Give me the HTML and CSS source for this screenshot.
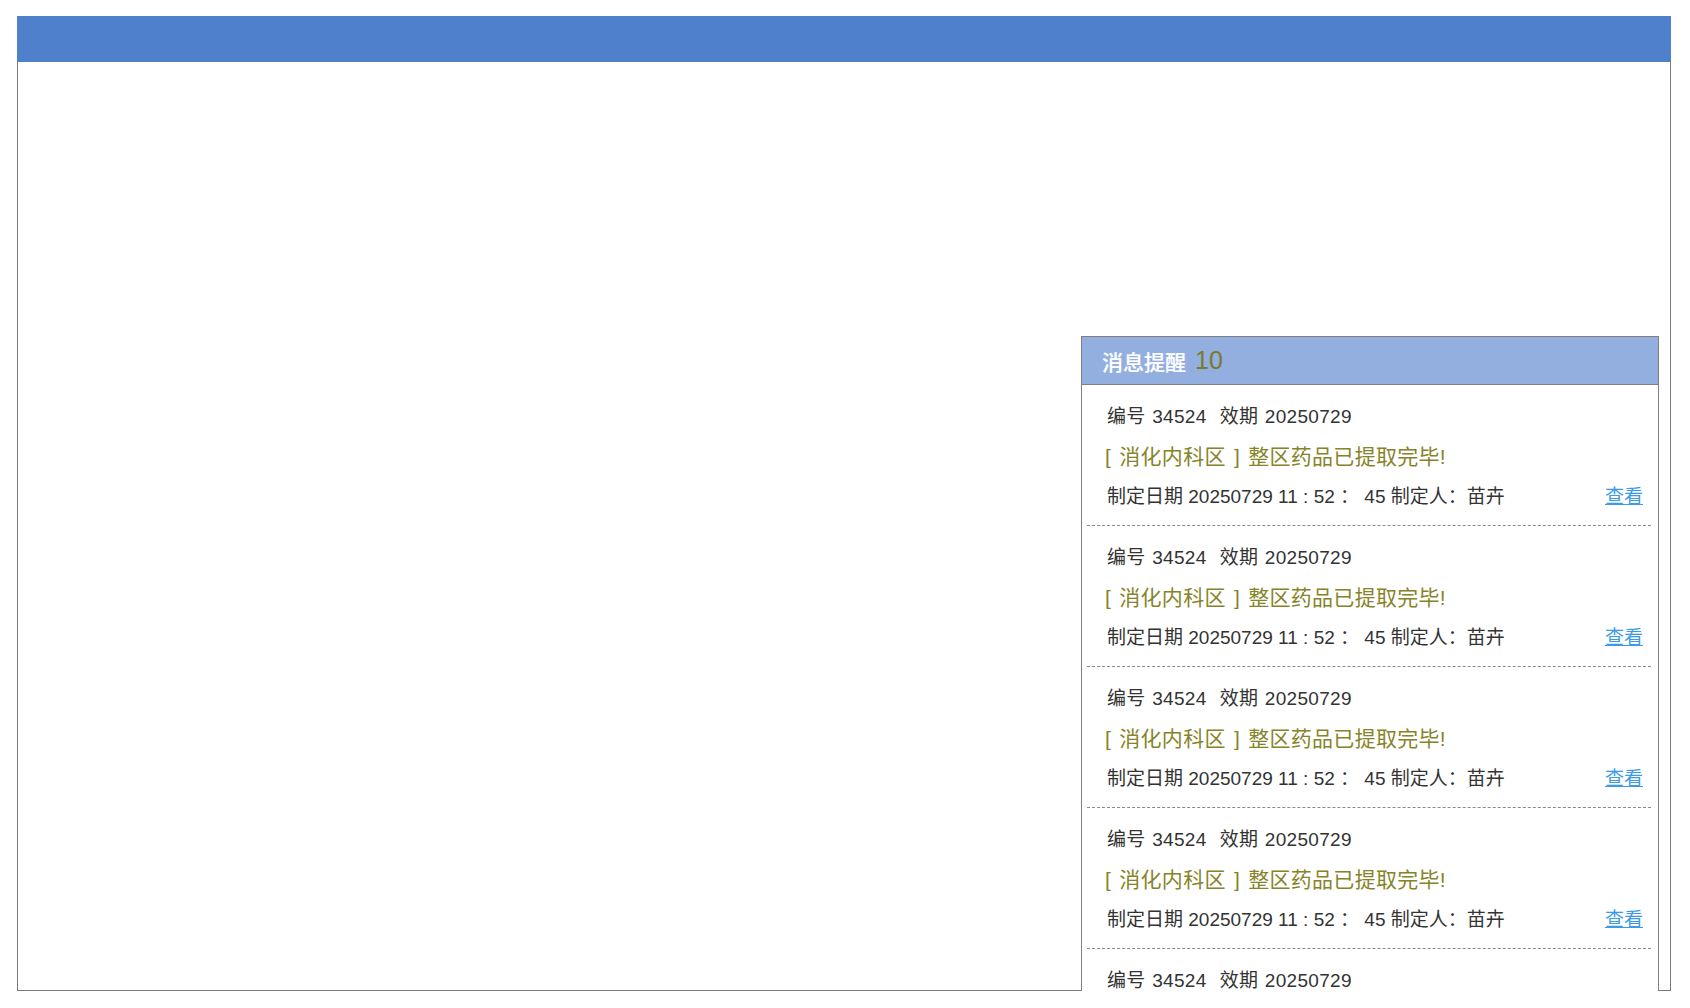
FILE: index.html
```html
<!DOCTYPE html>
<html lang="zh-CN">
<head>
<meta charset="utf-8">
<title>消息提醒</title>
<link rel="stylesheet" href="styles.css">
</head>
<body>
<div class="app">
  <header class="topbar"></header>
  <main class="main">
    <section class="notice">
      <div class="notice-head">
        <span class="notice-title">消息提醒</span><span class="notice-count">10</span>
      </div>
      <ul class="notice-list">
        <li class="notice-item">
          <div class="line meta">编号 34524&nbsp;&nbsp;效期 20250729</div>
          <div class="line msg">[ 消化内科区 ] 整区药品已提取完毕!</div>
          <div class="line foot"><span>制定日期 20250729 11 : 52 ： 45 制定人：苗卉</span><a class="view" href="#">查看</a></div>
        </li>
        <li class="notice-item">
          <div class="line meta">编号 34524&nbsp;&nbsp;效期 20250729</div>
          <div class="line msg">[ 消化内科区 ] 整区药品已提取完毕!</div>
          <div class="line foot"><span>制定日期 20250729 11 : 52 ： 45 制定人：苗卉</span><a class="view" href="#">查看</a></div>
        </li>
        <li class="notice-item">
          <div class="line meta">编号 34524&nbsp;&nbsp;效期 20250729</div>
          <div class="line msg">[ 消化内科区 ] 整区药品已提取完毕!</div>
          <div class="line foot"><span>制定日期 20250729 11 : 52 ： 45 制定人：苗卉</span><a class="view" href="#">查看</a></div>
        </li>
        <li class="notice-item">
          <div class="line meta">编号 34524&nbsp;&nbsp;效期 20250729</div>
          <div class="line msg">[ 消化内科区 ] 整区药品已提取完毕!</div>
          <div class="line foot"><span>制定日期 20250729 11 : 52 ： 45 制定人：苗卉</span><a class="view" href="#">查看</a></div>
        </li>
        <li class="notice-item">
          <div class="line meta">编号 34524&nbsp;&nbsp;效期 20250729</div>
          <div class="line msg">[ 消化内科区 ] 整区药品已提取完毕!</div>
          <div class="line foot"><span>制定日期 20250729 11 : 52 ： 45 制定人：苗卉</span><a class="view" href="#">查看</a></div>
        </li>
        <li class="notice-item">
          <div class="line meta">编号 34524&nbsp;&nbsp;效期 20250729</div>
          <div class="line msg">[ 消化内科区 ] 整区药品已提取完毕!</div>
          <div class="line foot"><span>制定日期 20250729 11 : 52 ： 45 制定人：苗卉</span><a class="view" href="#">查看</a></div>
        </li>
      </ul>
    </section>
  </main>
</div>
</body>
</html>
```

FILE: styles.css
```css
* {
  box-sizing: border-box;
}

html, body {
  margin: 0;
  padding: 0;
  background: #ffffff;
}

body {
  font-family: "Liberation Sans", "Noto Sans CJK SC", sans-serif;
  color: #333333;
}

.app {
  margin: 16px 0 0 17px;
  width: 1654px;
}

.topbar {
  height: 46px;
  background: #4f80cb;
}

.main {
  position: relative;
  height: 929px;
  border: 1px solid #7a7a7a;
  border-top: none;
}

.notice {
  position: absolute;
  right: 11px;
  bottom: -1px;
  width: 578px;
  height: 655px;
  overflow: hidden;
  background: #ffffff;
  border: 1px solid #808080;
  border-bottom: none;
}

.notice-head {
  display: flex;
  align-items: center;
  height: 48px;
  padding-left: 20px;
  background: #92afdf;
  border-bottom: 1px solid #808080;
}

.notice-title {
  font-size: 21px;
  font-weight: 500;
  color: #ffffff;
  -webkit-text-stroke: 0.2px #ffffff;
}

.notice-count {
  margin-left: 9px;
  font-size: 25px;
  color: #7b7a2c;
}

.notice-list {
  list-style: none;
  margin: 0;
  padding: 0;
}

.notice-item {
  margin: 0 7px 0 5px;
  padding: 12px 8px 8px 20px;
  border-bottom: 1px dashed #8a8a8a;
}

.line {
  height: 40px;
  line-height: 40px;
  white-space: nowrap;
}

.meta {
  font-size: 19px;
  letter-spacing: 0.3px;
  word-spacing: 1px;
  color: #333333;
}

.msg {
  font-size: 21px;
  letter-spacing: 0.3px;
  word-spacing: 2px;
  color: #868428;
  margin-left: -2px;
}

.foot {
  display: flex;
  justify-content: space-between;
  font-size: 19px;
  color: #333333;
}

.view {
  color: #3b9be8;
  text-decoration: underline;
}
```
